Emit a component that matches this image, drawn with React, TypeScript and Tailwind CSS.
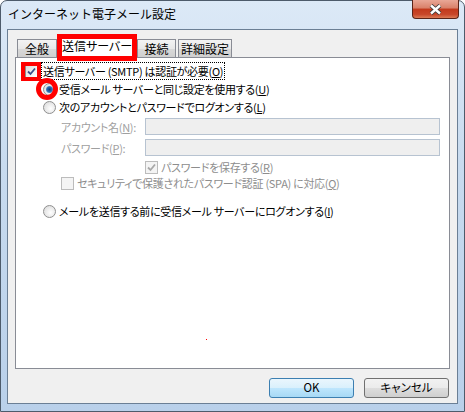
import type { ReactNode } from "react";

const FONT = "font-['Noto_Sans_CJK_JP','Noto_Sans',sans-serif]";

function Check({ checked, disabled }: { checked: boolean; disabled?: boolean }) {
  return (
    <span
      className={`relative flex h-[13px] w-[13px] shrink-0 items-center justify-center border ${
        disabled
          ? "border-[#bcbcbc] bg-[#f4f4f4]"
          : "border-[#8e8f8f] bg-[linear-gradient(135deg,#dcdcdc,#ffffff)]"
      }`}
    >
      {checked && (
        <svg width="9" height="9" viewBox="0 0 9 9">
          <path
            d="M1 4.5 L3.5 7 L8 1.5"
            fill="none"
            stroke={disabled ? "#a8a8a8" : "#3a4f8a"}
            strokeWidth="1.8"
          />
        </svg>
      )}
    </span>
  );
}

function Radio({ checked }: { checked: boolean }) {
  return (
    <span className="flex h-[13px] w-[13px] shrink-0 items-center justify-center rounded-full border border-[#8f8f8f] bg-[radial-gradient(circle_at_60%_60%,#ffffff,#d6d6d6)]">
      {checked && (
        <span className="h-[7px] w-[7px] rounded-full bg-[radial-gradient(circle,#0e3a78_0%,#2a69b0_50%,#8cc6ee_100%)]" />
      )}
    </span>
  );
}

function Key({ children }: { children: ReactNode }) {
  return <span className="underline underline-offset-1">{children}</span>;
}

function Tab({ label, className }: { label: string; className?: string }) {
  return (
    <div
      className={`flex h-[18px] items-center justify-center whitespace-nowrap border border-b-0 border-[#898c95] bg-[linear-gradient(#f3f3f3,#e8e8e8_50%,#d9d9d9_51%,#cfcfcf)] text-[12px] ${className ?? ""}`}
    >
      {label}
    </div>
  );
}

function PushButton({ label, primary }: { label: string; primary?: boolean }) {
  return (
    <button
      type="button"
      className={`flex h-[20px] w-[85px] items-center justify-center rounded-[3px] border text-[11.5px] leading-none ${
        primary
          ? "border-[#3c7fb1] bg-[linear-gradient(#eaf6fd,#d9f0fc_50%,#bee6fd_51%,#a7d9f5)]"
          : "border-[#707070] bg-[linear-gradient(#f2f2f2,#ebebeb_50%,#dddddd_51%,#cfcfcf)]"
      }`}
    >
      {label}
    </button>
  );
}

export default function App() {
  return (
    <div
      className={`${FONT} [font-feature-settings:'palt'] relative flex h-[412px] w-[465px] flex-col rounded-t-[7px] border border-[#4d5b6b] bg-[linear-gradient(#dce9f7,#c8dbef_40%,#b9d0ea)] text-black`}
    >
      {/* title bar */}
      <div className="flex h-[28px] shrink-0 items-start justify-between">
        <div className="mt-[5px] pl-[7px] text-[12px] leading-[16px] [font-feature-settings:normal]">
          インターネット電子メール設定
        </div>
        <div className="-mt-px mr-[5px] flex h-[19px] w-[47px] items-center justify-center rounded-b-[4px] border border-t-0 border-[#5a2418] bg-[linear-gradient(#e9a796,#d98069_45%,#c2391c_50%,#c8472a_80%,#dc7a55)]">
          <svg width="15" height="11" viewBox="0 0 15 11">
            <path d="M3 1.5 L12 9.5 M12 1.5 L3 9.5" stroke="#3b3b3b" strokeWidth="4.2" />
            <path d="M3 1.5 L12 9.5 M12 1.5 L3 9.5" stroke="#ffffff" strokeWidth="2.4" />
          </svg>
        </div>
      </div>

      {/* client area */}
      <div className="mx-[6px] flex h-[375px] flex-col border border-[#6b7f95] bg-[#f0f0f0] px-[7px] pt-[4px]">
        {/* tabs */}
        <div className="flex h-[23px] items-end pl-[2px]">
          <Tab label="全般" className="w-[40px]" />
          <div className="relative z-10 -mb-[4px] flex h-[27px] w-[80px] items-center justify-center whitespace-nowrap border-[5px] border-[#ff0000] bg-white pb-[3px] text-[12px]">
            送信サーバー
          </div>
          <Tab label="接続" className="w-[39px]" />
          <Tab label="詳細設定" className="ml-[2px] w-[54px]" />
        </div>

        {/* panel */}
        <div className="relative flex h-[312px] flex-col whitespace-nowrap border border-[#898c95] bg-white text-[11px] leading-[16px] tracking-[-0.3px]">
          <div className="relative mt-[4px] flex h-[18px] items-center pl-[9px]">
            <Check checked />
            <span className="pointer-events-none absolute left-[5px] top-[0px] h-[19px] w-[20px] border-[4px] border-[#ff0000]" />
            <span className="ml-[3px] border border-dotted border-black px-[1px]">
              送信サーバー (SMTP) は認証が必要(<Key>O</Key>)
            </span>
          </div>

          <div className="relative flex h-[18px] items-center pl-[27px]">
            <Radio checked />
            <span className="pointer-events-none absolute left-[20px] top-[-2px] h-[22px] w-[22px] rounded-full border-[5px] border-[#ff0000]" />
            <span className="ml-[3px]">
              受信メール サーバーと同じ設定を使用する(<Key>U</Key>)
            </span>
          </div>

          <div className="flex h-[18px] items-center pl-[27px]">
            <Radio checked={false} />
            <span className="ml-[3px]">
              次のアカウントとパスワードでログオンする(<Key>L</Key>)
            </span>
          </div>

          <div className="mt-[2px] flex h-[17px] items-center pl-[45px] text-[#a0a0a0]">
            <span className="w-[84px]">
              アカウント名(<Key>N</Key>):
            </span>
            <span className="h-[17px] w-[295px] border border-[#b7c3d1] bg-[#efefef]" />
          </div>

          <div className="mt-[4px] flex h-[17px] items-center pl-[45px] text-[#a0a0a0]">
            <span className="w-[84px]">
              パスワード(<Key>P</Key>):
            </span>
            <span className="h-[17px] w-[295px] border border-[#b7c3d1] bg-[#efefef]" />
          </div>

          <div className="mt-[3px] flex h-[16px] items-center pl-[129px] text-[#8d8d8d]">
            <Check checked disabled />
            <span className="ml-[3px]">
              パスワードを保存する(<Key>R</Key>)
            </span>
          </div>

          <div className="flex h-[16px] items-center pl-[45px] text-[#8d8d8d]">
            <Check checked={false} disabled />
            <span className="ml-[3px]">
              セキュリティで保護されたパスワード認証 (SPA) に対応(<Key>Q</Key>)
            </span>
          </div>

          <div className="mt-[11px] flex h-[18px] items-center pl-[27px]">
            <Radio checked={false} />
            <span className="ml-[3px]">
              メールを送信する前に受信メール サーバーにログオンする(<Key>I</Key>)
            </span>
          </div>

          <span className="absolute left-[190px] top-[281px] h-px w-px bg-[#ff0000]" />
        </div>

        {/* buttons */}
        <div className="mt-[9px] flex justify-end gap-[10px] pr-[1px]">
          <PushButton label="OK" primary />
          <PushButton label="キャンセル" />
        </div>
      </div>
    </div>
  );
}
